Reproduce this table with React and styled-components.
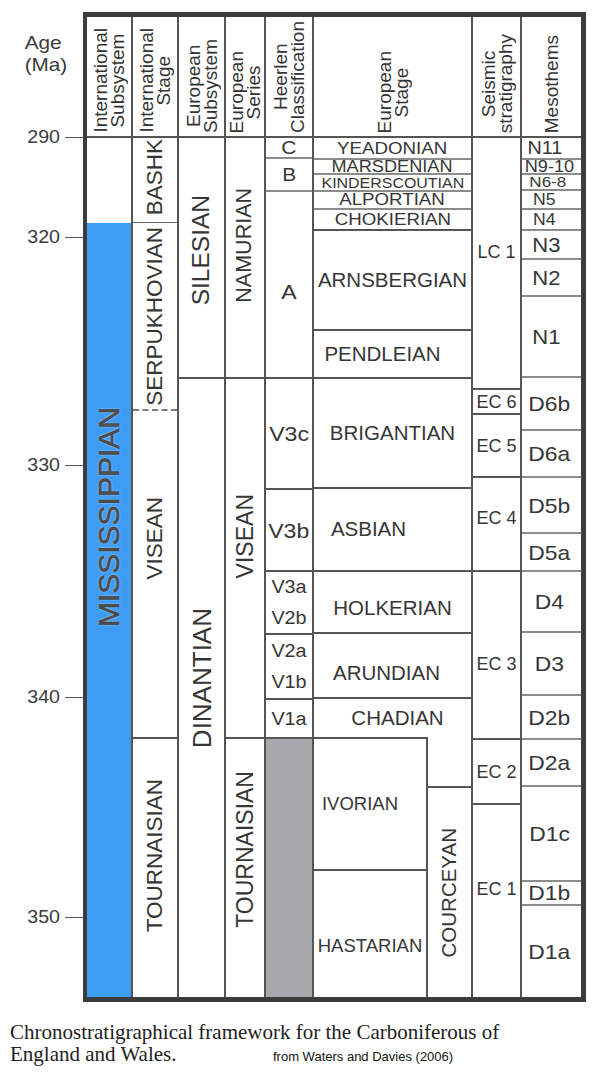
import React from 'react';
import styled, { createGlobalStyle } from 'styled-components';

const BLUE = '#3f9cf5';
const GRAY = '#a9a9ad';
const INK = '#363636';
const COLS = '44px 46px 47px 40px 48px 159px 49px 61px';
const BODY_TOP = 138;

const LINE = {
  none: 'none',
  solid: '2px solid #555',
  thin: '2px solid #8c8c8c',
  hair: '1px solid #666',
  dashed: '2px dashed #7a7a7a',
};

const GlobalStyle = createGlobalStyle`
  body {
    margin: 0;
    background: #fff;
    font-family: "Liberation Sans", Arial, sans-serif;
  }
`;

const Page = styled.div`
  width: 602px;
`;

const ChartRow = styled.div`
  display: flex;
  align-items: flex-start;
`;

const Axis = styled.div`
  width: 83px;
  flex: none;
  display: flex;
  flex-direction: column;
  color: #3a3a3a;
`;

const AxisTitle = styled.div`
  box-sizing: border-box;
  height: 76px;
  padding: 32px 0 0 22px;
  font-size: 18.5px;
  line-height: 22px;
  transform: scaleX(1.12);
  transform-origin: left center;
`;

const TickRow = styled.div`
  display: flex;
  align-items: center;
  height: 20px;
  margin-top: ${p => p.$gap}px;
`;

const TickLabel = styled.span`
  width: 60px;
  text-align: right;
  font-size: 17.5px;
  transform: scaleX(1.12);
  transform-origin: right center;
`;

const TickMark = styled.span`
  width: 18px;
  height: 1px;
  margin-left: 5px;
  background: #555;
`;

const Frame = styled.div`
  width: 494px;
  margin-top: 12px;
  border-style: solid;
  border-color: #3c3c3c;
  border-width: 5px 5px 5px 4px;
`;

const HeaderGrid = styled.div`
  display: grid;
  grid-template-columns: ${COLS};
  box-sizing: border-box;
  height: 121px;
  border-bottom: 2px solid #555;
`;

const HeaderCell = styled.div`
  display: flex;
  justify-content: center;
  align-items: flex-end;
  padding-bottom: 3px;
  border-left: ${p => (p.$first ? 'none' : LINE.solid)};
`;

const HeaderText = styled.span`
  writing-mode: vertical-rl;
  transform: rotate(180deg);
  text-align: center;
  font-size: 19px;
  line-height: 17px;
  color: #333;
  white-space: nowrap;
`;

const BodyGrid = styled.div`
  display: grid;
  grid-template-columns: ${COLS};
  height: 859px;
`;

const BodyCol = styled.div`
  display: flex;
  flex-direction: column;
  min-width: 0;
  border-left: ${p => (p.$first ? 'none' : LINE.solid)};
`;

const Cell = styled.div`
  box-sizing: border-box;
  flex: none;
  height: ${p => p.$h}px;
  border-top: ${p => LINE[p.$edge]};
  background: ${p => p.$bg || 'transparent'};
  display: flex;
  flex-direction: column;
  align-items: center;
  justify-content: ${p => (p.$pair ? 'space-around' : 'center')};
  padding: ${p => `${p.$pt || 0}px ${p.$pr || 0}px ${p.$pb || 0}px ${p.$pl || 0}px`};
`;

const Label = styled.span`
  font-size: ${p => p.$size}px;
  line-height: ${p => (p.$lh ? `${p.$lh}px` : 1)};
  white-space: nowrap;
  color: ${p => (p.$halo ? '#505050' : INK)};
  writing-mode: ${p => (p.$v ? 'vertical-rl' : 'horizontal-tb')};
  transform: ${p => (p.$v ? 'rotate(180deg)' : `scaleX(${p.$sx || 1})`)};
  ${p => p.$halo && `
    -webkit-text-stroke: 0.45px #2a2a2a;
    text-shadow: 0 0 2px rgba(255, 255, 255, 0.95);
  `}
`;

const LowerBlock = styled.div`
  display: flex;
  height: 260px;
`;

const SubCol = styled.div`
  display: flex;
  flex-direction: column;
  box-sizing: border-box;
  width: ${p => (p.$w ? `${p.$w}px` : 'auto')};
  flex: ${p => (p.$w ? 'none' : '1')};
  border-right: ${p => (p.$divider ? LINE.solid : 'none')};
`;

const Caption = styled.div`
  margin-top: 19px;
  padding-left: 10px;
  font-family: "Liberation Serif", "Times New Roman", serif;
  font-size: 21px;
  line-height: 22px;
  color: #222;
`;

const CaptionLine = styled.div`
  display: flex;
  align-items: baseline;
`;

const CaptionLead = styled.span`
  width: 263px;
  flex: none;
`;

const Source = styled.span`
  font-family: "Liberation Sans", Arial, sans-serif;
  font-size: 13px;
  color: #111;
`;

const TICKS = [
  { y: 137, label: '290' },
  { y: 237, label: '320' },
  { y: 465, label: '330' },
  { y: 697, label: '340' },
  { y: 917, label: '350' },
];

const HEADERS = [
  ['International', 'Subsystem'],
  ['International', 'Stage'],
  ['European', 'Subsystem'],
  ['European', 'Series'],
  ['Heerlen', 'Classification'],
  ['European', 'Stage'],
  ['Seismic', 'stratigraphy'],
  ['Mesothems'],
];

const v = true;

const INT_SUBSYSTEM = [
  { to: 223 },
  { to: 997, edge: 'none', bg: BLUE, text: 'MISSISSIPPIAN', size: 30, v, halo: true, pb: 186 },
];

const INT_STAGE = [
  { to: 222, text: 'BASHK', size: 22.5, v, pb: 6 },
  { to: 409, edge: 'hair', text: 'SERPUKHOVIAN', size: 22.5, v },
  { to: 737, edge: 'dashed', text: 'VISEAN', size: 22.5, v, pb: 72 },
  { to: 997, text: 'TOURNAISIAN', size: 22.5, v, pb: 24 },
];

const EU_SUBSYSTEM = [
  { to: 377, text: 'SILESIAN', size: 24.5, v, pb: 15 },
  { to: 997, text: 'DINANTIAN', size: 26, v, pb: 20 },
];

const EU_SERIES = [
  { to: 377, text: 'NAMURIAN', size: 21.5, v, pb: 25 },
  { to: 737, text: 'VISEAN', size: 23, v, pb: 44 },
  { to: 997, text: 'TOURNAISIAN', size: 23, v, pb: 38 },
];

const HEERLEN = [
  { to: 157, text: 'C', size: 19, sx: 1.1, lh: 16 },
  { to: 190, edge: 'thin', text: 'B', size: 19, sx: 1.1 },
  { to: 377, edge: 'thin', text: 'A', size: 21, sx: 1.1, pt: 14 },
  { to: 488, text: 'V3c', size: 21, sx: 1.1 },
  { to: 570, text: 'V3b', size: 21, sx: 1.1 },
  { to: 633, pair: ['V3a', 'V2b'], size: 18, sx: 1.1 },
  { to: 698, pair: ['V2a', 'V1b'], size: 18, sx: 1.1 },
  { to: 737, text: 'V1a', size: 18, sx: 1.1 },
  { to: 997, bg: GRAY },
];

const EU_STAGE = [
  { to: 158, text: 'YEADONIAN', size: 17, sx: 1.1, lh: 17 },
  { to: 173, edge: 'thin', text: 'MARSDENIAN', size: 16.5, sx: 1.1, lh: 13 },
  { to: 190, edge: 'thin', text: 'KINDERSCOUTIAN', size: 14.5, sx: 1.1, lh: 14 },
  { to: 208, edge: 'thin', text: 'ALPORTIAN', size: 17, sx: 1.1, lh: 16 },
  { to: 229, edge: 'thin', text: 'CHOKIERIAN', size: 17, sx: 1.1 },
  { to: 329, text: 'ARNSBERGIAN', size: 20.5 },
  { to: 377, text: 'PENDLEIAN', size: 20.5, pr: 20 },
  { to: 487, text: 'BRIGANTIAN', size: 20.5 },
  { to: 570, text: 'ASBIAN', size: 20.5, pr: 48 },
  { to: 632, text: 'HOLKERIAN', size: 20.5, pt: 12 },
  { to: 697, text: 'ARUNDIAN', size: 20.5, pr: 12, pt: 16 },
  { to: 737, text: 'CHADIAN', size: 20.5, pl: 10 },
];

const IVORIAN_SIDE = [
  { to: 869, edge: 'solid', text: 'IVORIAN', size: 18.5, pr: 20 },
  { to: 997, text: 'HASTARIAN', size: 18.5, pt: 24 },
];

const COURCEYAN_SIDE = [
  { to: 786 },
  { to: 997, text: 'COURCEYAN', size: 20.5, v },
];

const SEISMIC = [
  { to: 388, text: 'LC 1', size: 18, pb: 22 },
  { to: 413, text: 'EC 6', size: 18 },
  { to: 476, text: 'EC 5', size: 18 },
  { to: 570, text: 'EC 4', size: 18, pb: 12 },
  { to: 738, text: 'EC 3', size: 18, pt: 18 },
  { to: 803, text: 'EC 2', size: 18 },
  { to: 997, text: 'EC 1', size: 18, pb: 24 },
];

const N = { size: 21, sx: 1.05, pr: 10 };
const D = { size: 21, sx: 1.09, pr: 4 };

const MESOTHEMS = [
  { to: 158, text: 'N11', size: 18, sx: 1.1, pr: 14, lh: 17 },
  { to: 173, text: 'N9-10', size: 16.5, sx: 1.1, pr: 4, lh: 13 },
  { to: 189, text: 'N6-8', size: 15.5, sx: 1.1, pr: 8, lh: 14 },
  { to: 208, text: 'N5', size: 16, sx: 1.1, pr: 14, lh: 16 },
  { to: 229, text: 'N4', size: 16, sx: 1.1, pr: 14 },
  { to: 258, text: 'N3', ...N },
  { to: 295, text: 'N2', ...N },
  { to: 376, text: 'N1', ...N },
  { to: 429, text: 'D6b', ...D },
  { to: 476, text: 'D6a', ...D },
  { to: 532, text: 'D5b', ...D },
  { to: 570, text: 'D5a', ...D },
  { to: 631, text: 'D4', ...D },
  { to: 694, text: 'D3', ...D },
  { to: 738, text: 'D2b', ...D },
  { to: 785, text: 'D2a', ...D },
  { to: 880, text: 'D1c', ...D },
  { to: 904, text: 'D1b', ...D, lh: 20 },
  { to: 997, text: 'D1a', ...D },
];

function Stack({ items, start = BODY_TOP, edge = 'solid' }) {
  let prev = start;
  return items.map((it, i) => {
    const h = it.to - prev;
    prev = it.to;
    const label = (text, key) => (
      <Label key={key} $size={it.size} $sx={it.sx} $v={it.v} $halo={it.halo} $lh={it.lh}>
        {text}
      </Label>
    );
    return (
      <Cell
        key={i}
        $h={h}
        $edge={it.edge || (i === 0 ? 'none' : edge)}
        $bg={it.bg}
        $pt={it.pt}
        $pb={it.pb}
        $pl={it.pl}
        $pr={it.pr}
        $pair={!!it.pair}
      >
        {it.text && label(it.text)}
        {it.pair && it.pair.map((t, j) => label(t, j))}
      </Cell>
    );
  });
}

function AgeAxis() {
  return (
    <Axis>
      <AxisTitle>
        Age
        <br />
        (Ma)
      </AxisTitle>
      {TICKS.map((t, i) => (
        <TickRow key={t.label} $gap={i === 0 ? t.y - 10 - 76 : t.y - TICKS[i - 1].y - 20}>
          <TickLabel>{t.label}</TickLabel>
          <TickMark />
        </TickRow>
      ))}
    </Axis>
  );
}

export default function App() {
  return (
    <Page>
      <GlobalStyle />
      <ChartRow>
        <AgeAxis />
        <Frame>
          <HeaderGrid>
            {HEADERS.map((lines, i) => (
              <HeaderCell key={i} $first={i === 0}>
                <HeaderText>
                  {lines.map((l, j) => (
                    <React.Fragment key={j}>
                      {j > 0 && <br />}
                      {l}
                    </React.Fragment>
                  ))}
                </HeaderText>
              </HeaderCell>
            ))}
          </HeaderGrid>
          <BodyGrid>
            <BodyCol $first>
              <Stack items={INT_SUBSYSTEM} />
            </BodyCol>
            <BodyCol>
              <Stack items={INT_STAGE} />
            </BodyCol>
            <BodyCol>
              <Stack items={EU_SUBSYSTEM} />
            </BodyCol>
            <BodyCol>
              <Stack items={EU_SERIES} />
            </BodyCol>
            <BodyCol>
              <Stack items={HEERLEN} />
            </BodyCol>
            <BodyCol>
              <Stack items={EU_STAGE} />
              <LowerBlock>
                <SubCol $w={114} $divider>
                  <Stack items={IVORIAN_SIDE} start={737} />
                </SubCol>
                <SubCol>
                  <Stack items={COURCEYAN_SIDE} start={737} />
                </SubCol>
              </LowerBlock>
            </BodyCol>
            <BodyCol>
              <Stack items={SEISMIC} />
            </BodyCol>
            <BodyCol>
              <Stack items={MESOTHEMS} edge="thin" />
            </BodyCol>
          </BodyGrid>
        </Frame>
      </ChartRow>
      <Caption>
        <CaptionLine>Chronostratigraphical framework for the Carboniferous of</CaptionLine>
        <CaptionLine>
          <CaptionLead>England and Wales.</CaptionLead>
          <Source>from Waters and Davies (2006)</Source>
        </CaptionLine>
      </Caption>
    </Page>
  );
}
